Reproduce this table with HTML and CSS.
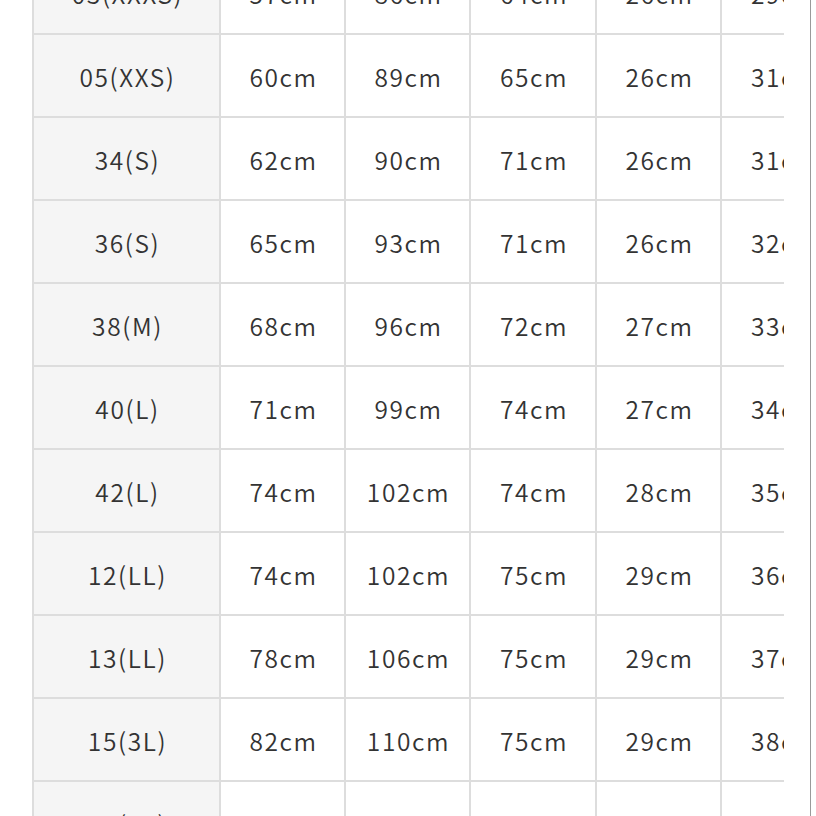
FILE: index.html
```html
<!DOCTYPE html>
<html lang="ja">
<head>
<meta charset="utf-8">
<title>サイズ表</title>
<link rel="stylesheet" href="styles.css">
</head>
<body>
<div class="page">
  <div class="spacer"></div>
  <div class="clip">
    <div class="grid">
      <div class="cell head">03(XXXS)</div><div class="cell">57cm</div><div class="cell">86cm</div><div class="cell">64cm</div><div class="cell">26cm</div><div class="cell">29cm</div>
      <div class="cell head">05(XXS)</div><div class="cell">60cm</div><div class="cell">89cm</div><div class="cell">65cm</div><div class="cell">26cm</div><div class="cell">31cm</div>
      <div class="cell head">34(S)</div><div class="cell">62cm</div><div class="cell">90cm</div><div class="cell">71cm</div><div class="cell">26cm</div><div class="cell">31cm</div>
      <div class="cell head">36(S)</div><div class="cell">65cm</div><div class="cell">93cm</div><div class="cell">71cm</div><div class="cell">26cm</div><div class="cell">32cm</div>
      <div class="cell head">38(M)</div><div class="cell">68cm</div><div class="cell">96cm</div><div class="cell">72cm</div><div class="cell">27cm</div><div class="cell">33cm</div>
      <div class="cell head">40(L)</div><div class="cell">71cm</div><div class="cell">99cm</div><div class="cell">74cm</div><div class="cell">27cm</div><div class="cell">34cm</div>
      <div class="cell head">42(L)</div><div class="cell">74cm</div><div class="cell">102cm</div><div class="cell">74cm</div><div class="cell">28cm</div><div class="cell">35cm</div>
      <div class="cell head">12(LL)</div><div class="cell">74cm</div><div class="cell">102cm</div><div class="cell">75cm</div><div class="cell">29cm</div><div class="cell">36cm</div>
      <div class="cell head">13(LL)</div><div class="cell">78cm</div><div class="cell">106cm</div><div class="cell">75cm</div><div class="cell">29cm</div><div class="cell">37cm</div>
      <div class="cell head">15(3L)</div><div class="cell">82cm</div><div class="cell">110cm</div><div class="cell">75cm</div><div class="cell">29cm</div><div class="cell">38cm</div>
      <div class="cell head">17(4L)</div><div class="cell">86cm</div><div class="cell">114cm</div><div class="cell">75cm</div><div class="cell">30cm</div><div class="cell">40cm</div>
    </div>
  </div>
  <div class="gap"></div>
  <div class="rule"></div>
</div>
</body>
</html>
```

FILE: styles.css
```css
html, body {
  margin: 0;
  padding: 0;
  background: #ffffff;
  overflow: hidden;
}

.page {
  display: flex;
  width: 816px;
  height: 816px;
  overflow: hidden;
}

.spacer {
  flex: 0 0 32px;
}

.clip {
  flex: 0 0 752px;
  height: 816px;
  overflow: hidden;
}

.gap {
  flex: 0 0 26px;
}

.rule {
  flex: 0 0 1px;
  background: #9a9a9a;
}

.grid {
  display: grid;
  grid-template-columns: 185px 123px 123px 124px 123px 124px;
  grid-auto-rows: 81px;
  gap: 2px;
  padding: 2px;
  margin-top: -50px;
  width: max-content;
  background: #dddddd;
}

.cell {
  display: flex;
  align-items: center;
  justify-content: center;
  padding-top: 2px;
  padding-left: 2px;
  background: #ffffff;
  color: #333333;
  font-family: "Noto Sans CJK JP", "Noto Sans", sans-serif;
  font-size: 24.5px;
  font-weight: 350;
  letter-spacing: 1.6px;
  white-space: nowrap;
}

.head {
  background: #f5f5f5;
}
```
